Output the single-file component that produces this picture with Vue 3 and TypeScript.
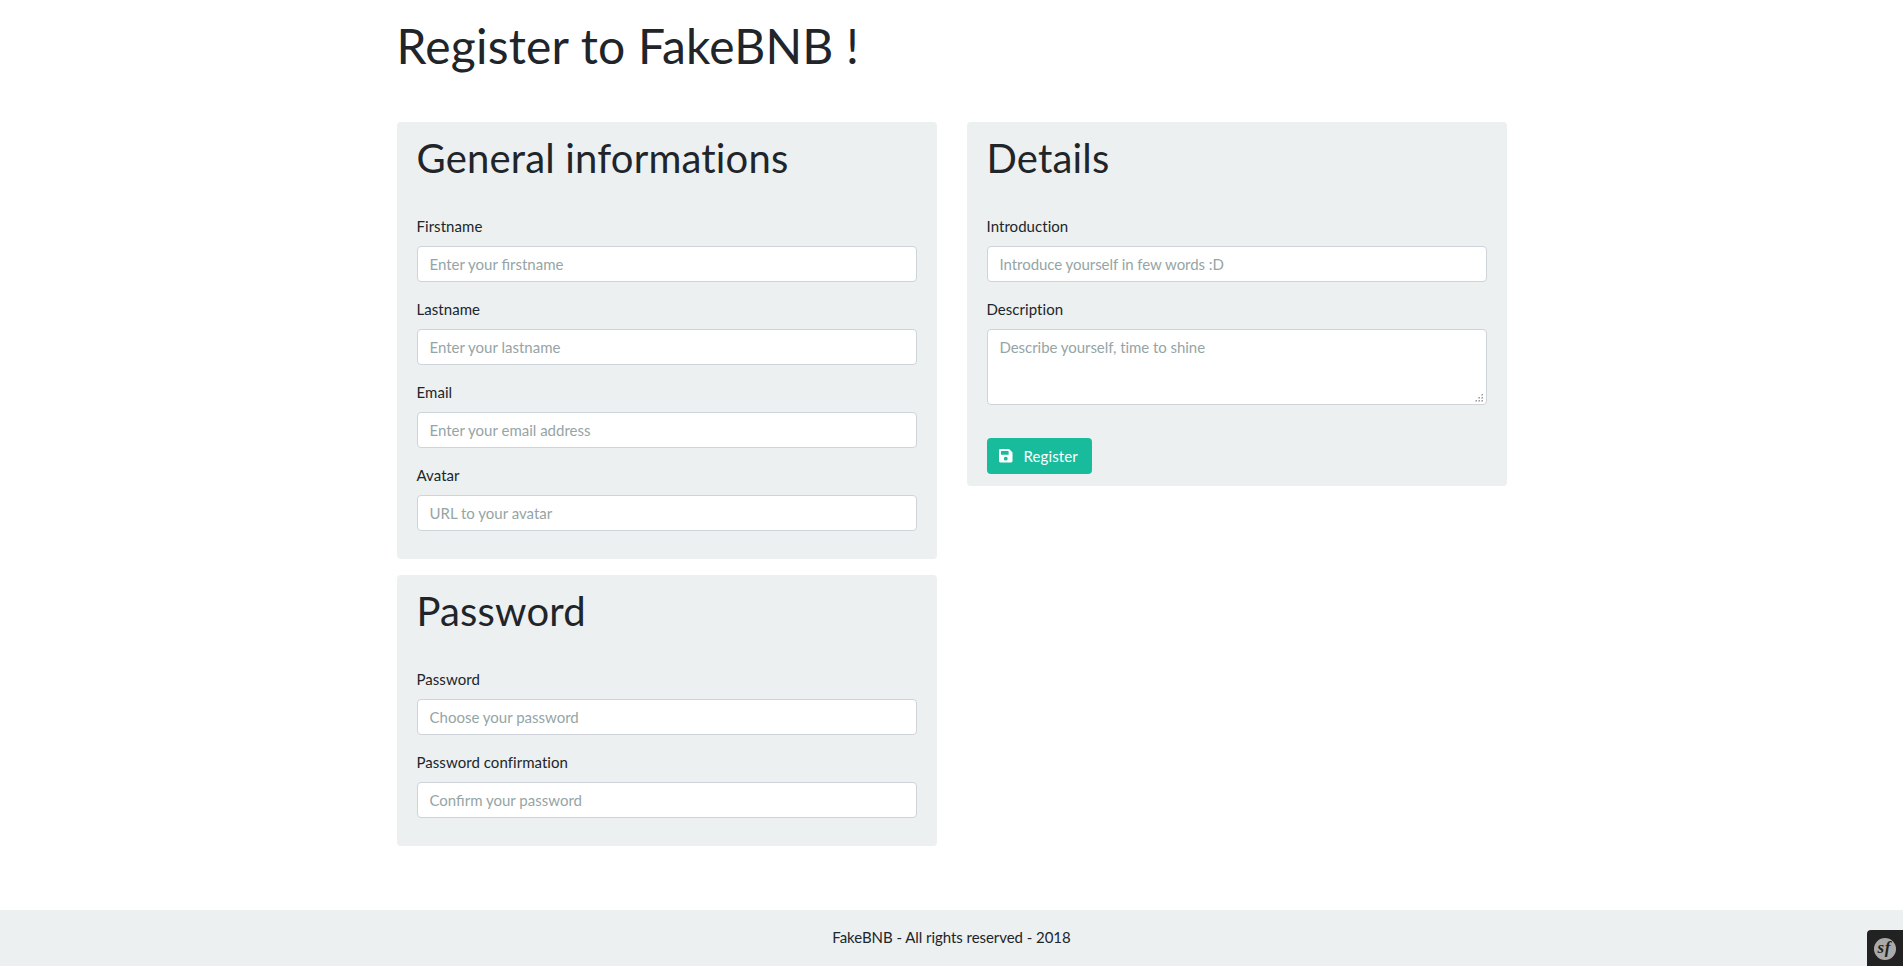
<script setup lang="ts">
interface Field {
  id: string
  label: string
  placeholder: string
  type?: string
}

interface Section {
  title: string
  fields: Field[]
}

const sections: Section[] = [
  {
    title: 'General informations',
    fields: [
      { id: 'firstname', label: 'Firstname', placeholder: 'Enter your firstname' },
      { id: 'lastname', label: 'Lastname', placeholder: 'Enter your lastname' },
      { id: 'email', label: 'Email', placeholder: 'Enter your email address', type: 'email' },
      { id: 'avatar', label: 'Avatar', placeholder: 'URL to your avatar', type: 'url' },
    ],
  },
  {
    title: 'Password',
    fields: [
      { id: 'password', label: 'Password', placeholder: 'Choose your password', type: 'password' },
      { id: 'confirm', label: 'Password confirmation', placeholder: 'Confirm your password', type: 'password' },
    ],
  },
]
</script>

<template>
  <div class="page">
    <main class="container">
      <h1>Register to FakeBNB !</h1>
      <form class="row" @submit.prevent>
        <div class="col">
          <section v-for="s in sections" :key="s.title" class="panel">
            <h2>{{ s.title }}</h2>
            <div v-for="f in s.fields" :key="f.id" class="group">
              <label :for="f.id">{{ f.label }}</label>
              <input :id="f.id" class="control" :type="f.type ?? 'text'" :placeholder="f.placeholder" />
            </div>
          </section>
        </div>
        <div class="col">
          <section class="panel">
            <h2>Details</h2>
            <div class="group">
              <label for="intro">Introduction</label>
              <input id="intro" class="control tight" type="text" placeholder="Introduce yourself in few words :D" />
            </div>
            <div class="group">
              <label for="description">Description</label>
              <div class="area">
                <textarea id="description" class="control tight" placeholder="Describe yourself, time to shine"></textarea>
                <svg class="grip" width="8" height="8" viewBox="0 0 8 8" shape-rendering="crispEdges">
                  <path fill="#d0d0d0" d="M6 0h2v2H6zM3 3h2v2H3zM6 3h2v2H6zM0 6h2v2H0zM3 6h2v2H3zM6 6h2v2H6z" />
                  <path fill="#999" d="M7 0h1v1H7zM4 3h1v1H4zM7 3h1v1H7zM1 6h1v1H1zM4 6h1v1H4zM7 6h1v1H7z" />
                </svg>
              </div>
            </div>
            <button type="submit" class="btn">
              <svg class="save" width="13.5" height="13.5" viewBox="0 0 448 448" fill="currentColor">
                <path
                  fill-rule="evenodd"
                  d="M434 98 350 14a48 48 0 0 0-34-14H48A48 48 0 0 0 0 48v352a48 48 0 0 0 48 48h352a48 48 0 0 0 48-48V132a48 48 0 0 0-14-34zM224 384a64 64 0 1 1 0-128 64 64 0 0 1 0 128zM320 79v101a12 12 0 0 1-12 12H76a12 12 0 0 1-12-12V76a12 12 0 0 1 12-12h229z"
                />
              </svg>
              <span>Register</span>
            </button>
          </section>
        </div>
      </form>
    </main>
    <footer class="footer">FakeBNB - All rights reserved - 2018</footer>
    <div class="toolbar">
      <svg width="22" height="22" viewBox="0 0 22 22">
        <circle cx="11" cy="11" r="11" fill="#aaa" />
        <g class="mark">
          <text x="3.4" y="14.8" font-size="17">s</text>
          <text x="10.8" y="15.2" font-size="17">f</text>
        </g>
      </svg>
    </div>
  </div>
</template>

<style>
html,
body {
  margin: 0;
  background: #fff;
}
</style>

<style scoped>
.page {
  box-sizing: border-box;
  display: flex;
  flex-direction: column;
  height: 966px;
  overflow: hidden;
  color: #212529;
  font: 400 15px/22.5px Lato, 'Liberation Sans', sans-serif;
}
.container {
  box-sizing: border-box;
  flex: 1;
  width: 1140px;
  margin: 0 auto;
  padding: 17px 15px 0;
}
h1,
h2 {
  margin: 0;
  font-weight: 400;
}
h1 {
  margin-bottom: 47px;
  font-size: 48px;
  line-height: 58px;
  letter-spacing: 0.22px;
}
h2 {
  margin-bottom: 33px;
  font-size: 40px;
  line-height: 48px;
  letter-spacing: 0.18px;
}
.row {
  display: grid;
  grid-template-columns: 540px 540px;
  gap: 30px;
  align-items: start;
}
.col {
  display: flex;
  flex-direction: column;
  gap: 16px;
}
.panel {
  padding: 12px 20px;
  border-radius: 4px;
  background: #ecf0f1;
}
.group {
  margin-bottom: 16px;
}
label {
  display: block;
  margin-bottom: 8.5px;
  letter-spacing: 0.05px;
}
.control {
  box-sizing: border-box;
  display: block;
  width: 100%;
  height: 36px;
  margin: 0;
  padding: 6px 12px;
  border: 1px solid #ced4da;
  border-radius: 4px;
  outline: 0;
  background: #fff;
  color: #495057;
  font: inherit;
}
.control::placeholder {
  color: #95a5a6;
  opacity: 1;
}
.tight {
  letter-spacing: -0.05px;
}
.area {
  position: relative;
}
textarea.control {
  height: 76px;
  overflow: hidden;
  resize: none;
}
.grip {
  position: absolute;
  right: 4px;
  bottom: 3px;
}
.btn {
  display: flex;
  align-items: center;
  width: 105px;
  height: 36px;
  margin: 33px 0 0;
  padding: 0 0 0 12.5px;
  border: 0;
  border-radius: 4px;
  background: #18bc9c;
  color: #fff;
  font: inherit;
  letter-spacing: 0.1px;
}
.save {
  margin-right: 11px;
}
.footer {
  box-sizing: border-box;
  height: 56px;
  padding-top: 16px;
  background: #ecf0f1;
  text-align: center;
  letter-spacing: -0.05px;
}
.toolbar {
  position: fixed;
  right: 0;
  bottom: 0;
  box-sizing: border-box;
  display: flex;
  justify-content: center;
  width: 36px;
  height: 36px;
  padding-top: 8px;
  border-top-left-radius: 4px;
  background: #222;
}
.mark {
  fill: #222;
  font-family: 'Liberation Serif', serif;
  font-style: italic;
  font-weight: 700;
}
</style>
